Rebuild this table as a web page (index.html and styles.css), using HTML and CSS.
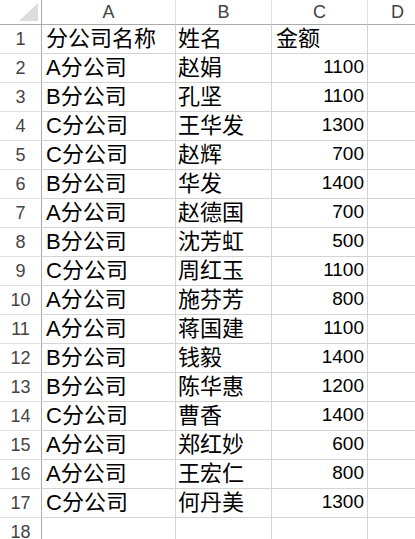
FILE: index.html
```html
<!DOCTYPE html>
<html lang="zh-CN">
<head>
<meta charset="utf-8">
<title>Sheet</title>
<link rel="stylesheet" href="styles.css">
</head>
<body>
<div class="sheet">
  <div class="row head">
    <div class="corner"><span class="tri"></span></div>
    <div class="ch">A</div><div class="ch">B</div><div class="ch">C</div><div class="ch">D</div>
  </div>
  <div class="row"><div class="rh">1</div><div class="c">分公司名称</div><div class="c">姓名</div><div class="c">金额</div><div class="c"></div></div>
  <div class="row"><div class="rh">2</div><div class="c">A分公司</div><div class="c">赵娟</div><div class="c n">1100</div><div class="c"></div></div>
  <div class="row"><div class="rh">3</div><div class="c">B分公司</div><div class="c">孔坚</div><div class="c n">1100</div><div class="c"></div></div>
  <div class="row"><div class="rh">4</div><div class="c">C分公司</div><div class="c">王华发</div><div class="c n">1300</div><div class="c"></div></div>
  <div class="row"><div class="rh">5</div><div class="c">C分公司</div><div class="c">赵辉</div><div class="c n">700</div><div class="c"></div></div>
  <div class="row"><div class="rh">6</div><div class="c">B分公司</div><div class="c">华发</div><div class="c n">1400</div><div class="c"></div></div>
  <div class="row"><div class="rh">7</div><div class="c">A分公司</div><div class="c">赵德国</div><div class="c n">700</div><div class="c"></div></div>
  <div class="row"><div class="rh">8</div><div class="c">B分公司</div><div class="c">沈芳虹</div><div class="c n">500</div><div class="c"></div></div>
  <div class="row"><div class="rh">9</div><div class="c">C分公司</div><div class="c">周红玉</div><div class="c n">1100</div><div class="c"></div></div>
  <div class="row"><div class="rh">10</div><div class="c">A分公司</div><div class="c">施芬芳</div><div class="c n">800</div><div class="c"></div></div>
  <div class="row"><div class="rh">11</div><div class="c">A分公司</div><div class="c">蒋国建</div><div class="c n">1100</div><div class="c"></div></div>
  <div class="row"><div class="rh">12</div><div class="c">B分公司</div><div class="c">钱毅</div><div class="c n">1400</div><div class="c"></div></div>
  <div class="row"><div class="rh">13</div><div class="c">B分公司</div><div class="c">陈华惠</div><div class="c n">1200</div><div class="c"></div></div>
  <div class="row"><div class="rh">14</div><div class="c">C分公司</div><div class="c">曹香</div><div class="c n">1400</div><div class="c"></div></div>
  <div class="row"><div class="rh">15</div><div class="c">A分公司</div><div class="c">郑红妙</div><div class="c n">600</div><div class="c"></div></div>
  <div class="row"><div class="rh">16</div><div class="c">A分公司</div><div class="c">王宏仁</div><div class="c n">800</div><div class="c"></div></div>
  <div class="row"><div class="rh">17</div><div class="c">C分公司</div><div class="c">何丹美</div><div class="c n">1300</div><div class="c"></div></div>
  <div class="row"><div class="rh">18</div><div class="c"></div><div class="c"></div><div class="c"></div><div class="c"></div></div>
</div>
</body>
</html>
```
FILE: styles.css
```css
html, body {
  margin: 0;
  padding: 0;
  background: #fff;
  overflow: hidden;
}
.sheet {
  width: 415px;
  height: 539px;
  overflow: hidden;
  font-family: "Liberation Sans", "Noto Sans CJK SC", sans-serif;
  color: #000;
}
.row {
  display: grid;
  grid-template-columns: 42px 134px 96px 96px 60px;
  height: 29px;
}
.row.head {
  height: 25px;
}
.corner {
  position: relative;
  border-right: 1px solid #ababab;
  border-bottom: 1px solid #ababab;
  background: #fff;
}
.tri {
  position: absolute;
  right: 3px;
  bottom: 3px;
  width: 0;
  height: 0;
  border-left: 19px solid transparent;
  border-bottom: 18px solid #dcdcdc;
}
.ch {
  display: flex;
  align-items: center;
  justify-content: center;
  border-right: 1px solid #e1e1e1;
  border-bottom: 1px solid #ababab;
  color: #444;
  font-size: 18px;
  padding-top: 1px;
}
.rh {
  display: flex;
  align-items: flex-end;
  justify-content: center;
  padding-bottom: 3px;
  border-right: 1px solid #ababab;
  border-bottom: 1px solid #e1e1e1;
  color: #444;
  font-size: 18px;
}
.c {
  display: flex;
  align-items: flex-end;
  padding: 0 3px 2px 4px;
  border-right: 1px solid #d4d4d4;
  border-bottom: 1px solid #d4d4d4;
  font-size: 22px;
  line-height: 25px;
  white-space: nowrap;
  overflow: hidden;
}
.c:nth-child(3) {
  padding-left: 2px;
}
.c.n {
  justify-content: flex-end;
  font-size: 19px;
  padding-bottom: 3px;
}
```
